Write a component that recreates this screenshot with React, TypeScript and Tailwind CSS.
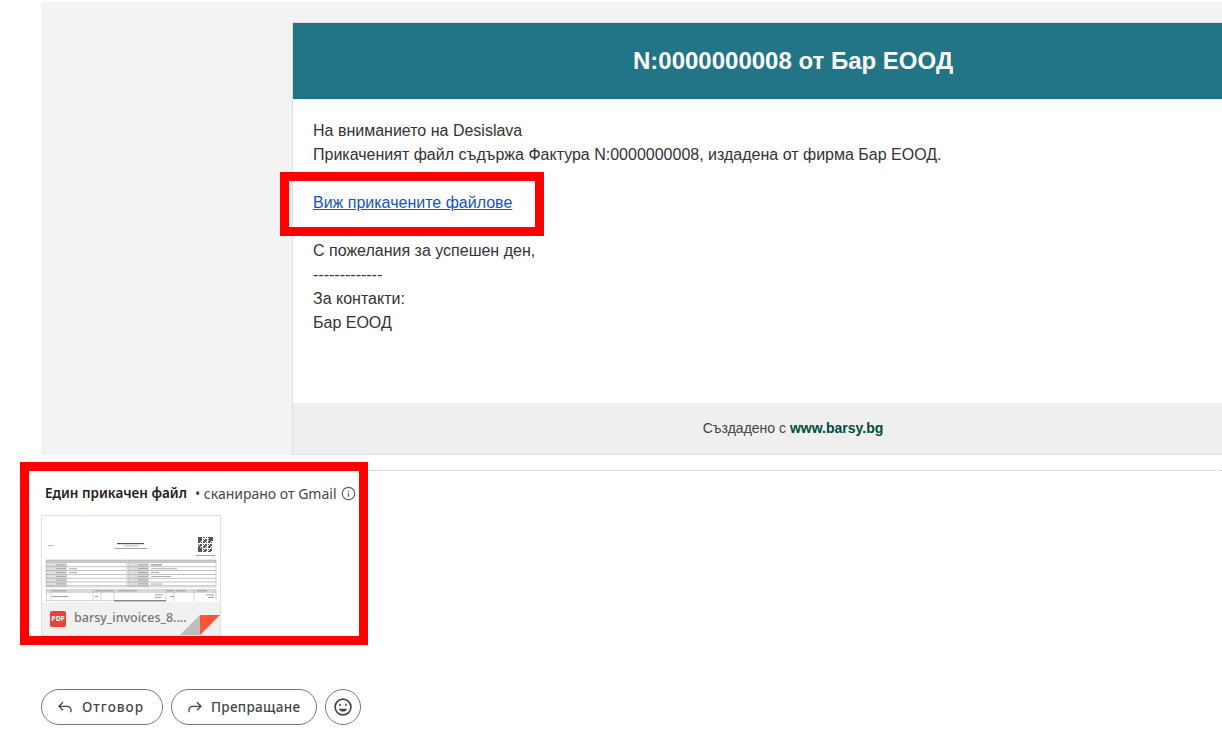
import React from "react";

const arial = "font-['Liberation_Sans',Arial,sans-serif]";
const gs = "font-['Noto_Sans','Roboto',sans-serif]";

const qrCells: [number, number][] = [];
for (let y = 0; y < 15; y++) {
  for (let x = 0; x < 15; x++) {
    const finder = (x < 4 && y < 4) || (x > 10 && y < 4) || (x < 4 && y > 10);
    if (finder || ((x * 7 + y * 13 + x * y * 3) % 5) < 3) qrCells.push([x, y]);
  }
}

function Thumb() {
  const rows = [0, 1, 2, 3, 4, 5];
  return (
    <svg viewBox="0 0 178 86" width="178" height="86" className="block">
      <rect width="178" height="86" fill="#fff" />
      <rect x="6" y="29" width="6" height="1" fill="#bbb" />
      <rect x="75" y="27" width="27" height="1.200" fill="#555" />
      <rect x="82" y="29.500" width="14" height="0.900" fill="#aaa" />
      <rect x="73" y="32" width="32" height="0.900" fill="#999" />
      <g fill="#555">
        {qrCells.map(([x, y]) => (
          <rect key={`${x}-${y}`} x={156 + x} y={21 + y} width="1" height="1" />
        ))}
      </g>
      <rect x="154" y="39" width="19" height="1" fill="#8f9df2" />
      <rect x="4" y="44" width="81" height="3" fill="#c8c8c8" />
      <rect x="86" y="44" width="88" height="3" fill="#c8c8c8" />
      <rect x="4" y="47" width="21" height="24" fill="#dedede" />
      <rect x="86" y="47" width="21" height="24" fill="#dedede" />
      {rows.map((r) => (
        <g key={r}>
          <rect x="4" y={50.500 + r * 3.800} width="81" height="0.600" fill="#999" />
          <rect x="86" y={50.500 + r * 3.800} width="88" height="0.600" fill="#999" />
          <rect x="14" y={48.500 + r * 3.800} width="10" height="0.800" fill="#999" />
          <rect x="96" y={48.500 + r * 3.800} width="10" height="0.800" fill="#999" />
        </g>
      ))}
      <g stroke="#aaa" strokeWidth="0.500" fill="none">
        <rect x="4" y="44" width="81" height="27" />
        <rect x="86" y="44" width="88" height="27" />
      </g>
      <rect x="109" y="48.500" width="11" height="0.900" fill="#666" />
      <rect x="109" y="52.400" width="26" height="0.800" fill="#999" />
      <rect x="109" y="56.200" width="8" height="0.800" fill="#999" />
      <rect x="109" y="60" width="20" height="0.800" fill="#999" />
      <rect x="109" y="67.600" width="11" height="0.800" fill="#999" />
      <rect x="27" y="52.400" width="8" height="0.800" fill="#999" />
      <rect x="27" y="56.200" width="8" height="0.800" fill="#999" />
      <rect x="4" y="73" width="170" height="4" fill="#d8d8d8" />
      <g fill="#888">
        <rect x="10" y="74.500" width="14" height="0.800" />
        <rect x="53" y="74.500" width="6" height="0.800" />
        <rect x="60" y="74.500" width="11" height="0.800" />
        <rect x="76" y="74.500" width="19" height="0.800" />
        <rect x="125" y="74.500" width="6" height="0.800" />
        <rect x="134" y="74.500" width="10" height="0.800" />
        <rect x="155" y="74.500" width="10" height="0.800" />
        <rect x="10" y="80" width="16" height="0.800" />
        <rect x="53" y="80" width="3" height="0.800" />
        <rect x="113" y="78.500" width="8" height="0.800" />
        <rect x="113" y="81" width="6" height="0.800" />
        <rect x="128" y="80" width="4" height="0.800" />
        <rect x="164" y="78.500" width="8" height="0.800" />
        <rect x="166" y="81" width="6" height="0.800" />
      </g>
      <g stroke="#aaa" strokeWidth="0.500">
        <path d="M9 73v12M51 73v12M59 73v12M72 73v12M124 73v12M132 73v12M152 73v12M4.500 73v12M174 73v12M4 84.500h68" />
      </g>
      <rect x="72" y="84" width="52" height="1.500" fill="#888" />
    </svg>
  );
}

export default function App() {
  return (
    <div className="relative w-[1222px] h-[751px] overflow-hidden bg-white">
      <div className="pl-[41px] pt-[2px]">
        <div className="h-[453px] bg-[#f3f3f3] pl-[251px] pt-[20px]">
          <div className={`relative w-[1002px] h-[433px] border border-[#dedede] bg-white flex flex-col ${arial}`}>
            <div className="h-[76px] bg-[#217587] flex items-center justify-center text-white text-[24px] font-bold">
              N:0000000008 от Бар ЕООД
            </div>
            <div className="flex-1 pl-5 pt-5 text-[16px] leading-6 text-[#333333]">
              <p>На вниманието на Desislava</p>
              <p>Прикаченият файл съдържа Фактура N:0000000008, издадена от фирма Бар ЕООД.</p>
              <p className="mt-6">
                <a href="#" className="text-[#1155cc] underline">Виж прикачените файлове</a>
              </p>
              <p className="mt-6">С пожелания за успешен ден,</p>
              <p>-------------</p>
              <p>За контакти:</p>
              <p>Бар ЕООД</p>
            </div>
            <div className="h-[51px] bg-[#efefef] flex items-center justify-center text-[14px] text-[#444444]">
              <span>Създадено с <b className="text-[#004d40]">www.barsy.bg</b></span>
            </div>
            <div className="absolute left-[-13px] top-[149px] w-[264px] h-[64px] border-[9px] border-[#ff0000]" />
          </div>
        </div>

        <div className="mt-[15px] border-t border-dotted border-[#c4c4c4]" />

        <div className={`relative pt-[12px] ${gs}`} lang="bg">
          <div className="flex items-center h-[20px] pl-1 text-[14px] text-[#444746] whitespace-nowrap">
            <span className="font-semibold text-[#202124] text-[13.5px]">Един прикачен файл</span>
            <span className="ml-2">• сканирано от Gmail</span>
            <svg width="15" height="15" viewBox="0 0 24 24" className="ml-1" fill="none" stroke="#5f6368" strokeWidth="2">
              <circle cx="12" cy="12" r="10" />
              <path d="M12 11v6M12 7v2" />
            </svg>
          </div>
          <div className="relative mt-[12px] w-[180px] h-[121px] border border-[#e0e0e0] bg-white overflow-hidden">
            <Thumb />
            <div className="absolute left-0 right-0 bottom-0 h-[33px] bg-[#f1f1f1] flex items-center pl-2">
              <div className="w-4 h-4 rounded-[2px] bg-[#ea4335] flex items-center justify-center text-white text-[7px] font-bold leading-none">PDF</div>
              <span className="ml-2 text-[12.5px] font-medium text-[#757575] whitespace-nowrap">barsy_invoices_8....</span>
            </div>
            <svg width="40" height="20" viewBox="0 0 40 20" className="absolute right-0 bottom-0">
              <path d="M0 20 20 0V20Z" fill="#bdbdbd" />
              <path d="M20 0H40L20 20Z" fill="#ff5436" />
            </svg>
          </div>
          <div className="absolute left-[-21px] top-[-9px] w-[348px] h-[183px] border-[9px] border-[#ff0000]" />

          <div className="flex gap-2 mt-[53px] text-[13.5px] font-medium text-[#444746] whitespace-nowrap">
            <button className="w-[122px] h-9 rounded-full border border-[#747775] flex items-center pl-[15px] gap-[9px] tracking-[1px]">
              <svg width="16" height="16" viewBox="0 0 24 24" fill="none" stroke="#444746" strokeWidth="2">
                <path d="M9 5 3 11l6 6M3 11h12c3 0 6 2 6 6v3" />
              </svg>
              Отговор
            </button>
            <button className="w-[146px] h-9 rounded-full border border-[#747775] flex items-center pl-[15px] gap-[8px] tracking-[0.3px]">
              <svg width="16" height="16" viewBox="0 0 24 24" fill="none" stroke="#444746" strokeWidth="2">
                <path d="m15 5 6 6-6 6M21 11H9c-3 0-6 2-6 6v3" />
              </svg>
              Препращане
            </button>
            <button className="w-9 h-9 rounded-full border border-[#747775] flex items-center justify-center">
              <svg width="20" height="20" viewBox="0 0 24 24" fill="none" stroke="#444746" strokeWidth="2">
                <circle cx="12" cy="12" r="9.500" />
                <circle cx="8.500" cy="9.500" r="1.200" fill="#444746" stroke="none" />
                <circle cx="15.500" cy="9.500" r="1.200" fill="#444746" stroke="none" />
                <path d="M7 14h10c-.7 2.400-2.700 3.500-5 3.500S7.700 16.400 7 14Z" fill="#444746" stroke="none" />
              </svg>
            </button>
          </div>
        </div>
      </div>
    </div>
  );
}
